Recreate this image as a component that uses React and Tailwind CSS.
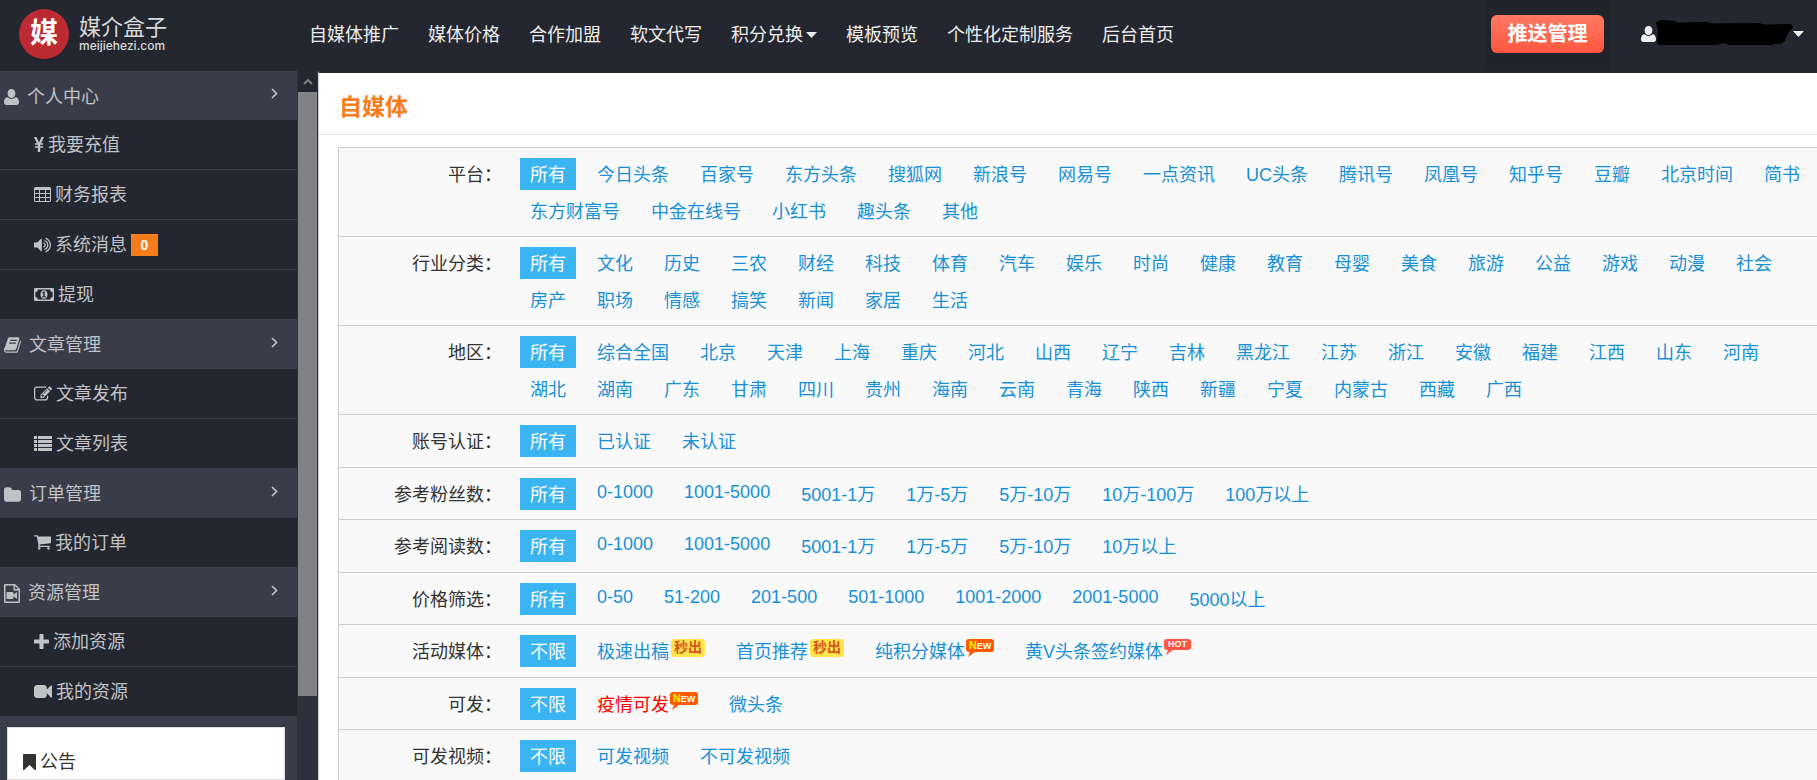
const NAV_LINKS = [
  { label: "自媒体推广" },
  { label: "媒体价格" },
  { label: "合作加盟" },
  { label: "软文代写" },
  { label: "积分兑换", dropdown: true },
  { label: "模板预览" },
  { label: "个性化定制服务" },
  { label: "后台首页" },
];

const MENU = [
  {
    title: "个人中心",
    icon: "user",
    items: [
      { label: "我要充值", icon: "yen" },
      { label: "财务报表", icon: "table" },
      { label: "系统消息", icon: "volume", badge: 0 },
      { label: "提现", icon: "money" },
    ],
  },
  {
    title: "文章管理",
    icon: "book",
    items: [
      { label: "文章发布", icon: "edit" },
      { label: "文章列表", icon: "list" },
    ],
  },
  {
    title: "订单管理",
    icon: "folder",
    items: [{ label: "我的订单", icon: "cart" }],
  },
  {
    title: "资源管理",
    icon: "fileVideo",
    items: [
      { label: "添加资源", icon: "plus" },
      { label: "我的资源", icon: "video" },
    ],
  },
];

const FILTERS = [
  {
    label: "平台",
    options: "所有 今日头条 百家号 东方头条 搜狐网 新浪号 网易号 一点资讯 UC头条 腾讯号 凤凰号 知乎号 豆瓣 北京时间 简书 东方财富号 中金在线号 小红书 趣头条 其他".split(" "),
  },
  {
    label: "行业分类",
    options: "所有 文化 历史 三农 财经 科技 体育 汽车 娱乐 时尚 健康 教育 母婴 美食 旅游 公益 游戏 动漫 社会 房产 职场 情感 搞笑 新闻 家居 生活".split(" "),
  },
  {
    label: "地区",
    options: "所有 综合全国 北京 天津 上海 重庆 河北 山西 辽宁 吉林 黑龙江 江苏 浙江 安徽 福建 江西 山东 河南 湖北 湖南 广东 甘肃 四川 贵州 海南 云南 青海 陕西 新疆 宁夏 内蒙古 西藏 广西".split(" "),
  },
  { label: "账号认证", options: ["所有", "已认证", "未认证"] },
  { label: "参考粉丝数", options: ["所有", "0-1000", "1001-5000", "5001-1万", "1万-5万", "5万-10万", "10万-100万", "100万以上"] },
  { label: "参考阅读数", options: ["所有", "0-1000", "1001-5000", "5001-1万", "1万-5万", "5万-10万", "10万以上"] },
  { label: "价格筛选", options: ["所有", "0-50", "51-200", "201-500", "501-1000", "1001-2000", "2001-5000", "5000以上"] },
  {
    label: "活动媒体",
    options: [
      "不限",
      { text: "极速出稿", tag: "fast" },
      { text: "首页推荐", tag: "fast" },
      { text: "纯积分媒体", tag: "new" },
      { text: "黄V头条签约媒体", tag: "hot" },
    ],
  },
  { label: "可发", options: ["不限", { text: "疫情可发", tag: "new", red: true }, "微头条"] },
  { label: "可发视频", options: ["不限", "可发视频", "不可发视频"] },
];

const ICONS = {
  user: {
    box: "0 0 15 16",
    size: "w-[15px] h-4",
    d: "M7.5 0C9.9 0 11.4 1.9 11.4 4.4S9.7 9 7.5 9 3.6 6.900 3.600 4.400 5.100 0 7.500 0zM3.600 8.200C4.600 9.300 6 9.900 7.500 9.900s2.900-.6 3.900-1.700C14 8.200 15 10.800 15 13.300 15 15 14 16 12.600 16H2.400C1 16 0 15 0 13.300 0 10.800 1 8.200 3.600 8.200z",
  },
  yen: {
    box: "0 0 10 15",
    size: "w-[10px] h-[15px]",
    d: "M0 0h2.500L5 5.400 7.500 0H10L7.200 6.200H9.200V7.800H6.200V9.200H9.200V10.800H6.200V15H3.800V10.800H.8V9.200H3.800V7.800H.8V6.200H2.800z",
  },
  table: {
    box: "0 0 17 15",
    size: "w-[17px] h-[15px]",
    d: "M1.500 0h14A1.500 1.500 0 0 1 17 1.500v12a1.500 1.500 0 0 1-1.500 1.500h-14A1.500 1.500 0 0 1 0 13.500v-12A1.500 1.500 0 0 1 1.500 0zM1 3v3h4V3zM6 3v3h5V3zM12 3v3h4V3zM1 7v3h4V7zM6 7v3h5V7zM12 7v3h4V7zM1 11v3h4v-3zM6 11v3h5v-3zM12 11v3h4v-3z",
  },
  volume: {
    box: "64 130 1664 1532",
    size: "w-[17px] h-4",
    d: "M832 352v1088q0 26-19 45t-45 19-45-19l-333-333h-262q-26 0-45-19t-19-45v-384q0-26 19-45t45-19h262l333-333q19-19 45-19t45 19 19 45zm384 544q0 76-42.5 141.5t-112.5 93.500q-10 5-25 5-26 0-45-18.500t-19-45.500q0-21 12-35.500t29-25 34-23 29-36 12-56.500-12-56.500-29-36-34-23-29-25-12-35.500q0-27 19-45.500t45-18.500q15 0 25 5 70 27 112.500 93t42.500 142zm256 0q0 153-85 282.500t-225 188.500q-13 5-25 5-27 0-46-19t-19-45q0-39 39-59 56-29 76-44 74-54 115.500-135.500t41.500-173.500-41.500-173.500-115.500-135.500q-20-15-76-44-39-20-39-59 0-26 19-45t45-19q13 0 26 5 140 59 225 188.500t85 282.500zm256 0q0 230-127 422.500t-338 283.500q-13 5-26 5-26 0-45-19t-19-45q0-36 39-59 7-4 22.500-10.500t22.500-10.500q46-25 82-51 123-91 192-227t69-289-69-289-192-227q-36-26-82-51-7-4-22.500-10.500t-22.500-10.500q-39-23-39-59 0-26 19-45t45-19q13 0 26 5 211 91 338 283.500t127 422.500z",
  },
  money: {
    box: "0 0 20 13",
    size: "w-5 h-[13px]",
    d: "M1 0h18a1 1 0 0 1 1 1v11a1 1 0 0 1-1 1H1a1 1 0 0 1-1-1V1a1 1 0 0 1 1-1zM4 1.400A2.700 2.700 0 0 1 1.400 4v5A2.700 2.700 0 0 1 4 11.600h12A2.700 2.700 0 0 1 18.600 9V4A2.700 2.700 0 0 1 16 1.400zM10 2.200c2.200 0 3.600 2 3.600 4.300s-1.400 4.300-3.600 4.300-3.600-2-3.600-4.300S7.800 2.200 10 2.200zM9.400 3.600L8 4.900l.7.7.6-.5V8.300H8.200v1h3.600v-1h-1.100V3.600z",
  },
  book: {
    box: "64 128 1668 1536",
    size: "w-[17px] h-4",
    d: "M1703 478q40 57 18 129l-275 906q-19 64-76.500 107.500t-122.500 43.500h-923q-77 0-148.500-53.500t-99.500-131.500q-24-67-2-127 0-4 3-27t4-37q1-8-3-21.500t-3-19.500q2-11 8-21t16.500-23.500 16.500-23.500q23-38 45-91.500t30-91.500q3-10 .5-30t-.5-28q3-11 17-28t17-23q21-36 42-92t25-90q1-9-2.500-32t.5-28q4-13 22-30.500t22-22.500q19-26 42.500-84.500t27.500-96.500q1-8-3-25.500t-2-26.500q2-8 9-18t18-23 17-21q8-12 16.500-30.500t15-35 16-36 19.500-32 26.500-23.500 36-11.500 47.500 5.500l-1 3q38-9 51-9h761q74 0 114 56t18 130l-274 906q-36 119-71.500 153.500t-128.500 34.500h-869q-27 0-38 15-11 16-1 43 24 70 144 70h923q29 0 56-15.500t35-41.500l300-987q7-22 5-57 38 15 59 43zm-1064 2q-4 13 2 22.500t20 9.500h608q13 0 25.500-9.500t16.500-22.500l21-64q4-13-2-22.500t-20-9.500h-608q-13 0-25.500 9.500t-16.500 22.500zm-83 256q-4 13 2 22.500t20 9.500h608q13 0 25.500-9.500t16.500-22.500l21-64q4-13-2-22.500t-20-9.500h-608q-13 0-25.500 9.500t-16.500 22.500z",
  },
  edit: {
    box: "0 128 1792 1408",
    size: "w-[18px] h-[15px]",
    d: "M888 1184l116-116-152-152-116 116v56h96v96h56zm440-720q-16-16-33 1l-350 350q-17 17-1 33t33-1l350-350q17-17 1-33zm80 594v190q0 119-84.500 203.500t-203.500 84.500h-832q-119 0-203.500-84.500t-84.500-203.500v-832q0-119 84.500-203.500t203.500-84.500h832q63 0 117 25 15 7 18 23 3 17-9 29l-49 49q-14 14-32 8-23-6-45-6h-832q-66 0-113 47t-47 113v832q0 66 47 113t113 47h832q66 0 113-47t47-113v-126q0-13 9-22l64-64q15-15 35-7t20 29zm-96-738l288 288-672 672h-288v-288zm444 132l-92 92-288-288 92-92q28-28 68-28t68 28l152 152q28 28 28 68t-28 68z",
  },
  list: {
    box: "0 0 18 15",
    size: "w-[18px] h-[15px]",
    d: "M0 0h3v3H0zM4 0h14v3H4zM0 4h3v3H0zM4 4h14v3H4zM0 8h3v3H0zM4 8h14v3H4zM0 12h3v3H0zM4 12h14v3H4z",
  },
  folder: {
    box: "64 128 1664 1408",
    size: "w-[17px] h-[15px]",
    d: "M1728 608v704q0 92-66 158t-158 66h-1216q-92 0-158-66t-66-158v-960q0-92 66-158t158-66h320q92 0 158 66t66 158v32h672q92 0 158 66t66 158z",
  },
  cart: {
    box: "64 256 1664 1408",
    size: "w-[17px] h-[15px]",
    d: "M704 1536q0 52-38 90t-90 38-90-38-38-90 38-90 90-38 90 38 38 90zm896 0q0 52-38 90t-90 38-90-38-38-90 38-90 90-38 90 38 38 90zm128-1088v512q0 24-16.500 42.500t-40.500 21.500l-1044 122q13 60 13 70 0 16-24 64h920q26 0 45 19t19 45-19 45-45 19h-1024q-26 0-45-19t-19-45q0-11 8-31.500t16-36 21.500-40 15.500-29.500l-177-823h-204q-26 0-45-19t-19-45 19-45 45-19h256q16 0 28.500 6.500t19.500 15.500 13 24.500 8 26 5.500 29.500 4.500 26h1201q26 0 45 19t19 45z",
  },
  fileVideo: {
    box: "0 0 16 19",
    size: "w-4 h-[19px]",
    d: "M1 0h10l5 5v13a1 1 0 0 1-1 1H1a1 1 0 0 1-1-1V1a1 1 0 0 1 1-1zM1.500 1.500v16h13V6.500H9.500v-5zM11 1.900V5h3.100zM3.500 8h5A1 1 0 0 1 9.500 9v1.800L13 8v7l-3.500-2.800V14a1 1 0 0 1-1 1h-5a1 1 0 0 1-1-1V9a1 1 0 0 1 1-1z",
  },
  plus: {
    box: "192 128 1408 1408",
    size: "w-[15px] h-[15px]",
    d: "M1600 736v192q0 40-28 68t-68 28h-416v416q0 40-28 68t-68 28h-192q-40 0-68-28t-28-68v-416h-416q-40 0-68-28t-28-68v-192q0-40 28-68t68-28h416v-416q0-40 28-68t68-28h192q40 0 68 28t28 68v416h416q40 0 68 28t28 68z",
  },
  video: {
    box: "0 288 1792 1216",
    size: "w-[18px] h-[13px]",
    d: "M1792 352v1088q0 42-39 59-13 5-25 5-27 0-45-19l-403-403v166q0 119-84.500 203.500t-203.500 84.500h-704q-119 0-203.500-84.500t-84.500-203.500v-704q0-119 84.500-203.500t203.500-84.500h704q119 0 203.500 84.500t84.500 203.500v165l403-402q18-19 45-19 12 0 25 5 39 17 39 59z",
  },
  bookmark: {
    box: "0 0 13 16",
    size: "w-[13px] h-4",
    d: "M.8 0h11.400a.8.8 0 0 1 .8.8V15.200a.8.8 0 0 1-1.400.5L6.500 11 1.400 15.700A.8.8 0 0 1 0 15.200V.8A.8.8 0 0 1 .8 0z",
  },
};

function Icon({ name }) {
  const { box, size, d } = ICONS[name];
  return (
    <svg viewBox={box} className={`shrink-0 ${size}`} fill="currentColor" fillRule="evenodd" aria-hidden="true">
      <path d={d} />
    </svg>
  );
}

function Caret() {
  return (
    <svg viewBox="0 0 11 6" className="h-1.5 w-[11px]" fill="currentColor" aria-hidden="true">
      <path d="M0 0h11L5.500 6z" />
    </svg>
  );
}

function Chevron() {
  return (
    <svg viewBox="0 0 7 11" className="w-[7px] h-[11px]" fill="none" stroke="currentColor" strokeWidth="1.700" aria-hidden="true">
      <path d="M1 1l4.500 4.500L1 10" />
    </svg>
  );
}

// Small label that hangs off the end of a filter link
function Tag({ type }) {
  if (type === "fast") {
    return (
      <span className="mt-1 ml-0.5 w-[34px] h-[18px] rounded bg-[#ffe54a] text-center text-[14px] leading-[17px] font-bold text-[#d9541e]">
        秒出
      </span>
    );
  }
  const isNew = type === "new";
  return (
    <span
      className={`relative mt-1 ml-px rounded-[3px] text-center font-bold text-white ${
        isNew ? "w-7 h-[13px] bg-[#ff5a00] text-[9px] leading-[13px]" : "w-[27px] h-[11px] bg-[#ff5542] text-[9px] leading-[11px]"
      }`}
    >
      {isNew ? (
        <>
          <span className="text-[11px] text-[#ffee00]">N</span>EW
        </>
      ) : (
        "HOT"
      )}
      <svg
        viewBox="0 0 7 5"
        className={`absolute left-0.5 top-full w-[7px] h-[5px] ${isNew ? "text-[#ff5a00]" : "text-[#ff5542]"}`}
        fill="currentColor"
        aria-hidden="true"
      >
        <path d="M2 0h5L0 5z" />
      </svg>
    </span>
  );
}

function Header() {
  return (
    <header className="flex h-[71px] shrink-0 items-stretch bg-[#24272f] text-[#eeeeee]">
      <a href="#" className="flex w-[309px] shrink-0 items-center gap-[10px] pb-[3px] pl-[19px]">
        <span className="flex size-[50px] items-center justify-center rounded-full bg-[#bc2b31] text-[28px] leading-none font-bold text-white">
          媒
        </span>
        <span className="flex flex-col text-[#d8d9db]">
          <span className="text-[22px] leading-6">媒介盒子</span>
          <span className="font-[Inter,sans-serif] text-[12px] leading-3 font-medium">meijiehezi.com</span>
        </span>
      </a>
      <nav className="flex items-center gap-[29px] pb-px">
        {NAV_LINKS.map((link) => (
          <a key={link.label} href="#" className="flex items-center gap-[3px] whitespace-nowrap">
            {link.label}
            {link.dropdown && <Caret />}
          </a>
        ))}
      </nav>
      <div className="ml-auto flex items-center bg-[#22242c] px-1.5 pb-1">
        <button
          type="button"
          className="h-[38px] w-[113px] rounded-md bg-linear-to-b from-[#ff7862] to-[#ff563f] text-[20px] font-bold text-white"
        >
          推送管理
        </button>
      </div>
      <button type="button" aria-label="账户" className="ml-[31px] mr-[13px] flex items-center pb-[3px]">
        <Icon name="user" />
        <svg viewBox="0 0 137 25" className="mb-1 h-[25px] w-[137px]" aria-hidden="true">
          <path
            d="M0 3Q2 0 6 0L18 1 21 2.500 52 2 57 3.500 103 3 108 4.500 134 4Q138 5 136 9L132 13 129 21 125 24 119 24 117 25 72 25 68 23 61 25 5 25Q0 25 1 20L2 11Z"
            fill="#000"
          />
        </svg>
        <Caret />
      </button>
    </header>
  );
}

function Sidebar() {
  return (
    <aside className="flex w-[297px] shrink-0 flex-col bg-[#3a3d49] text-[#c0c2c6]">
      {MENU.map((group) => (
        <section key={group.title} className="group">
          <button
            type="button"
            className="flex h-[50px] w-full items-center gap-2 bg-[#3a3d49] pt-0.5 pr-[19px] pl-1 group-first:h-[49px]"
          >
            <Icon name={group.icon} />
            <span>{group.title}</span>
            <span className="mb-1.5 ml-auto">
              <Chevron />
            </span>
          </button>
          <ul className="divide-y divide-[#3a3d49] bg-[#24272f]">
            {group.items.map((item) => (
              <li key={item.label}>
                <a href="#" className="flex h-[49px] items-center gap-1 pl-[34px]">
                  <Icon name={item.icon} />
                  {item.label}
                  {item.badge !== undefined && (
                    <span className="flex h-[22px] w-[27px] items-center justify-center bg-[#f77c1b] text-[14px] font-bold text-white">
                      {item.badge}
                    </span>
                  )}
                </a>
              </li>
            ))}
          </ul>
        </section>
      ))}
      <div className="mx-[7px] mt-[11px] mr-3 h-[200px] border border-[#dddddd] bg-white text-[#333333]">
        <h2 className="flex items-center gap-1 pt-[21px] pl-[15px]">
          <Icon name="bookmark" />
          公告
        </h2>
      </div>
    </aside>
  );
}

function ScrollBar() {
  return (
    <div className="flex w-[21px] shrink-0 flex-col bg-[#2e303b] px-px" aria-hidden="true">
      <div className="flex h-[21px] items-center justify-center bg-[#24272f] text-[#808084]">
        <svg viewBox="0 0 10 7" className="w-[10px] h-[7px]" fill="none" stroke="currentColor" strokeWidth="2">
          <path d="M1 6l4-4 4 4" />
        </svg>
      </div>
      <div className="h-[604px] bg-[#828286]" />
    </div>
  );
}

function FilterRow({ label, options }) {
  return (
    <div className="flex gap-[18px] border-b border-[#cccccc] pt-[10px] pb-[9px] nth-[2n+4]:pb-[10px]">
      <div className="h-8 w-[163px] shrink-0 text-right leading-[34px] text-[#333333]">{label}：</div>
      <ul className="flex flex-wrap items-start gap-x-[11px] gap-y-[5px]">
        {options.map((option, i) => {
          const { text, tag, red } = typeof option === "string" ? { text: option } : option;
          const color = i === 0 ? "bg-[#3bb4f2] text-white" : red ? "text-[#ff0000]" : "text-[#1890d5]";
          // plain number ranges sit on a shorter line than Chinese text
          const line = /^[\d-]+$/.test(text) ? "leading-7" : "leading-[34px]";
          return (
            <li key={text}>
              <a href="#" className={`flex h-8 items-start px-2.5 whitespace-nowrap ${line} ${color}`}>
                {text}
                {tag && <Tag type={tag} />}
              </a>
            </li>
          );
        })}
      </ul>
    </div>
  );
}

export default function App() {
  return (
    <div className="flex h-screen flex-col overflow-hidden bg-white font-['Liberation_Sans','Noto_Sans_CJK_SC',sans-serif] text-[18px] leading-[26px]">
      <Header />
      <div className="flex min-h-0 flex-1">
        <Sidebar />
        <ScrollBar />
        <main className="min-w-0 flex-1 border-t-2 border-l border-t-[#24272f] border-l-[#cccccc]">
          <div className="flex h-[62px] items-center border-b border-[#e5e5e5] pt-[7px] pl-[20px]">
            <h1 className="text-[23px] font-bold text-[#f77c1b]">自媒体</h1>
          </div>
          <div className="mt-3 ml-[19px] border-t border-l border-[#cccccc] bg-[#f9f9f9]">
            {FILTERS.map((filter) => (
              <FilterRow key={filter.label} label={filter.label} options={filter.options} />
            ))}
          </div>
        </main>
      </div>
    </div>
  );
}
